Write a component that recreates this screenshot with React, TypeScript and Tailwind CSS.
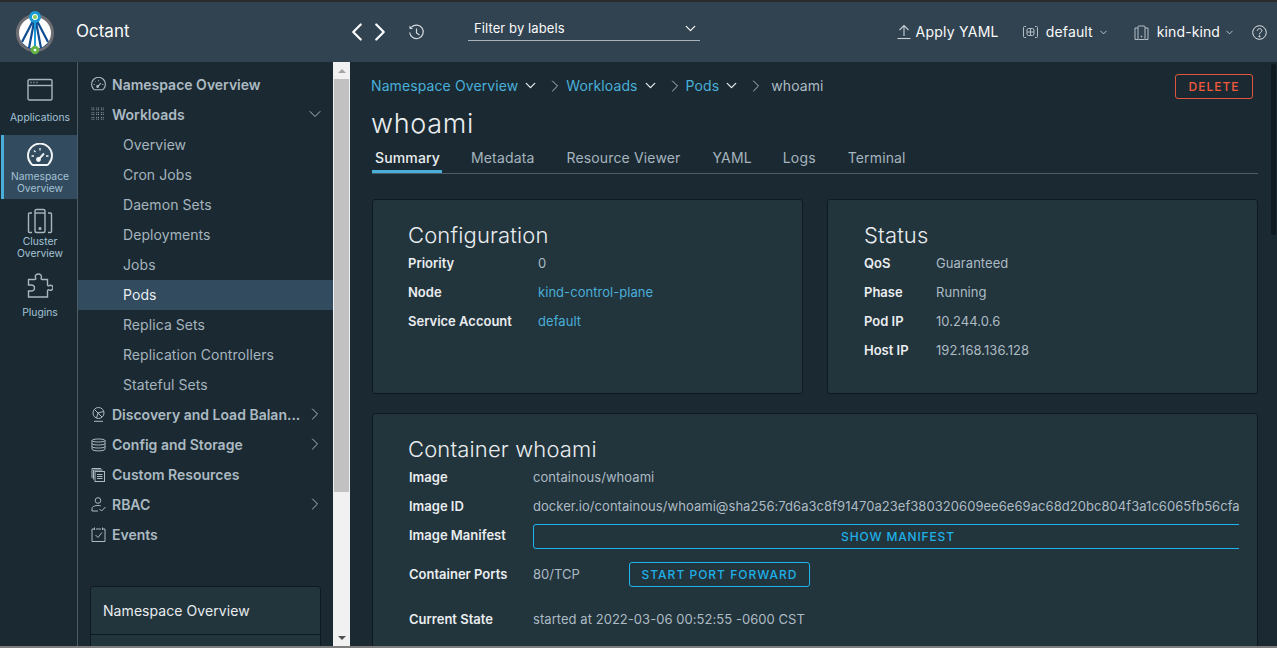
import React from 'react';
import { ChevronDown, ChevronLeft, ChevronRight } from 'lucide-react';

const stroke = { fill: 'none', stroke: 'currentColor', strokeWidth: 1.2 };

function Logo() {
  return (
    <svg width="40" height="46" viewBox="0 0 40 46">
      <circle cx="20" cy="24" r="17.5" fill="#fff" stroke="#6f6f73" strokeWidth="3" />
      <path d="M6 33 A17 17 0 0 0 34 33 L28 38 L20 41 L12 38 Z" fill="#0f4c92" />
      <path d="M20 8 L7 33 M20 8 L33 33 M20 8 L14 39 M20 8 L26 39" stroke="#0f4c92" strokeWidth="2.2" fill="none" />
      <path d="M19 8 h2 v32 h-2 z" fill="#1b9ad6" />
      <circle cx="20" cy="8" r="6" fill="#1b9ad6" />
      <circle cx="20" cy="8" r="2.6" fill="#8ccf5a" stroke="#fff" strokeWidth="1" />
      <circle cx="20" cy="41" r="4.2" fill="#62b544" />
      <circle cx="20" cy="41" r="1.3" fill="#fff" />
    </svg>
  );
}

function AppIcon() {
  return (
    <svg width="26" height="24" viewBox="0 0 26 24" {...stroke} strokeWidth={1.4}>
      <rect x="1" y="1.5" width="24" height="20.5" rx="1.5" />
      <path d="M1 7.5 H25" />
      <path d="M3.5 4.5h1M6.5 4.5h1M9.5 4.5h1" />
    </svg>
  );
}

function GaugeIcon({ size = 26 }: { size?: number }) {
  return (
    <svg width={size} height={size} viewBox="0 0 26 26" {...stroke} strokeWidth={1.9}>
      <path d="M6 22 H20 A3 3 0 0 0 22 20.5 A12 12 0 1 0 4 20.5 A3 3 0 0 0 6 22 Z" />
      <path d="M13 5v2.5M4.500 13h2.500M19 13h2.500M7 7.500l1.500 1.500" strokeWidth={1.3} />
      <path d="M11.500 16.500 L17 10.500" />
      <circle cx="11.500" cy="16.500" r="1.500" fill="currentColor" />
    </svg>
  );
}

function ClusterIcon() {
  return (
    <svg width="26" height="26" viewBox="0 0 26 26" {...stroke} strokeWidth={1.4}>
      <rect x="8" y="1.500" width="10" height="23" rx="1.500" />
      <path d="M8 5h10" />
      <path d="M5 5H2.500a1 1 0 0 0-1 1v17.500a1 1 0 0 0 1 1H5M21 5h2.500a1 1 0 0 1 1 1v17.500a1 1 0 0 1-1 1H21" />
      <circle cx="13" cy="20.500" r="0.900" fill="currentColor" />
    </svg>
  );
}

function PuzzleIcon() {
  return (
    <svg width="26" height="26" viewBox="0 0 26 26" {...stroke} strokeWidth={1.4}>
      <path d="M1.500 6.500h6.500c1.200 0 1-1.200 .5-2-1-2 1-3.500 3-3.500s3.500 1.800 2.800 3.500c-.4 1-.3 2 .7 2h5.500v5.500c0 1 1 1 2 .5 1.800-.8 3.500 .5 3.500 2.300s-1.700 3-3.500 2.300c-1-.4-2-.5-2 .5v6.400H1.500v-6h2.500c2.500 0 3.500-1.500 3.500-3s-1-3-3.500-3H1.500z" />
    </svg>
  );
}

function GridIcon() {
  return (
    <svg width="14" height="14" viewBox="0 0 14 14" fill="currentColor" opacity={0.8}>
      {[0.5, 5.200, 9.900].map((y) =>
        [0.5, 5.200, 9.900].map((x) => (
          <g key={`${x}-${y}`}>
            <rect x={x} y={y} width="1" height="1" />
            <rect x={x + 1.800} y={y} width="1" height="1" />
            <rect x={x} y={y + 1.800} width="1" height="1" />
            <rect x={x + 1.800} y={y + 1.800} width="1" height="1" />
          </g>
        )),
      )}
    </svg>
  );
}

function NetIcon() {
  return (
    <svg width="15" height="15" viewBox="0 0 15 15" {...stroke} strokeWidth={1}>
      <circle cx="7.500" cy="6" r="5.500" />
      <path d="M3.500 2.500 L7 6 L12.500 4.500 M7 6 L5.500 11 M7 6 L11 10" />
      <path d="M3 14.300 H12" />
    </svg>
  );
}

function DbIcon() {
  return (
    <svg width="15" height="15" viewBox="0 0 15 15" {...stroke} strokeWidth={1}>
      <path d="M1 3.500C1 1.500 14 1.500 14 3.500V12C14 14.500 1 14.500 1 12Z" />
      <path d="M1 3.500C1 5.500 14 5.500 14 3.500M1 6.500C1 8.500 14 8.500 14 6.500M1 9.500C1 11.500 14 11.500 14 9.500" />
    </svg>
  );
}

function PagesIcon() {
  return (
    <svg width="15" height="15" viewBox="0 0 15 15" {...stroke} strokeWidth={1}>
      <path d="M1 11V1.500h9" />
      <path d="M2.500 12.500V3h9" />
      <rect x="4" y="4.500" width="9.500" height="10" fill="#1b2a32" />
      <path d="M6 7.500h5.500M6 9.500h5.500M6 11.500h5.500" />
    </svg>
  );
}

function RbacIcon() {
  return (
    <svg width="15" height="15" viewBox="0 0 15 15" {...stroke} strokeWidth={1}>
      <circle cx="7" cy="3.500" r="2.800" />
      <path d="M1 14v-2.500C1 9.500 4 8.500 7 8.500c1 0 2 .1 2.800 .4M1 14h6" />
      <path d="M8.500 12l2 2 4-4" />
    </svg>
  );
}

function CalendarIcon() {
  return (
    <svg width="15" height="15" viewBox="0 0 15 15" {...stroke} strokeWidth={1}>
      <path d="M3.500 2H1v12.500h13V2h-2.500M5 2h5" />
      <path d="M3.500 .5v2.500M11.500 .5v2.500" />
      <path d="M4.500 8l2.500 2.500 4-5" />
    </svg>
  );
}

function HistoryIcon() {
  return (
    <svg width="17" height="17" viewBox="0 0 17 17" {...stroke} strokeWidth={1.200}>
      <path d="M3.500 3.200A6.800 6.800 0 1 1 1.700 8.500" />
      <path d="M1.500 1.500L1.500 5L5 5" fill="currentColor" stroke="none" />
      <path d="M8.500 4.500V9L11.500 11" />
    </svg>
  );
}

function UploadIcon() {
  return (
    <svg width="14" height="16" viewBox="0 0 14 16" {...stroke} strokeWidth={1.100}>
      <path d="M7 12V1.500M2.500 6L7 1.500 11.500 6" />
      <path d="M.5 14.500H13.500" />
    </svg>
  );
}

function NamespaceIcon() {
  return (
    <svg width="15" height="14" viewBox="0 0 15 14" {...stroke} strokeWidth={1}>
      <path d="M3 1.500H1.500a1 1 0 0 0-1 1v9a1 1 0 0 0 1 1H3M12 1.500h1.500a1 1 0 0 1 1 1v9a1 1 0 0 1-1 1H12" />
      <rect x="4" y="3.500" width="7" height="7" rx="1.500" />
      <path d="M4 7h7M7.500 3.500v7" />
    </svg>
  );
}

function ContextIcon() {
  return (
    <svg width="15" height="15" viewBox="0 0 15 15" {...stroke} strokeWidth={1}>
      <rect x="4" y="1" width="7" height="13.500" rx="1" />
      <path d="M4 3H1v11.500h3M11 3h3v11.500h-3" />
      <circle cx="7.500" cy="11.500" r=".5" fill="currentColor" />
    </svg>
  );
}

function HelpIcon() {
  return (
    <svg width="15" height="15" viewBox="0 0 15 15" {...stroke} strokeWidth={1}>
      <circle cx="7.500" cy="7.500" r="6.800" />
      <path d="M5.300 5.800C5.300 3 9.800 3 9.800 5.600 9.800 7.300 7.500 7.300 7.500 9.300" />
      <circle cx="7.500" cy="11.300" r=".6" fill="currentColor" />
    </svg>
  );
}

const rail = [
  { label: ['Applications'], icon: <AppIcon />, box: 'h-[73px] pt-[16px]', gap: 'mt-[9px]' },
  { label: ['Namespace', 'Overview'], icon: <GaugeIcon />, box: 'h-[64px] pt-[8px]', gap: 'mt-[1px]', active: true },
  { label: ['Cluster', 'Overview'], icon: <ClusterIcon />, box: 'h-[65px] pt-[9px]', gap: 'mt-[1px]' },
  { label: ['Plugins'], icon: <PuzzleIcon />, box: 'h-[60px] pt-[9px]', gap: 'mt-[7px]' },
];

const subItems = ['Overview', 'Cron Jobs', 'Daemon Sets', 'Deployments', 'Jobs', 'Pods', 'Replica Sets', 'Replication Controllers', 'Stateful Sets'];

const topItems = [
  { label: 'Discovery and Load Balan...', icon: <NetIcon />, arrow: true },
  { label: 'Config and Storage', icon: <DbIcon />, arrow: true },
  { label: 'Custom Resources', icon: <PagesIcon /> },
  { label: 'RBAC', icon: <RbacIcon />, arrow: true },
  { label: 'Events', icon: <CalendarIcon /> },
];

function NavTop({ label, icon, arrow, open }: { label: string; icon: React.ReactNode; arrow?: boolean; open?: boolean }) {
  return (
    <div className="flex h-[30px] shrink-0 items-center pb-[2px] pl-[13px] pr-[8px] text-[#acbac3]">
      <span className="flex w-[21px] shrink-0 items-center">{icon}</span>
      <span className="flex-1 truncate text-[14px] font-semibold">{label}</span>
      {open && <ChevronDown size={20} strokeWidth={1.200} />}
      {arrow && <ChevronRight size={20} strokeWidth={1.200} />}
    </div>
  );
}

function Scrollbar() {
  return (
    <div className="flex w-[17px] shrink-0 flex-col items-center bg-[#f1f1f1]">
      <div className="flex h-[17px] items-center justify-center">
        <div className="h-0 w-0 border-x-[4px] border-b-[4px] border-x-transparent border-b-[#a3a3a3]" />
      </div>
      <div className="h-[413px] w-[15px] bg-[#c1c1c1]" />
      <div className="flex-1" />
      <div className="flex h-[17px] items-center justify-center">
        <div className="h-0 w-0 border-x-[4px] border-t-[4px] border-x-transparent border-t-[#505050]" />
      </div>
    </div>
  );
}

function Crumb({ label }: { label: string }) {
  return (
    <>
      <span className="text-[#49afd9]">{label}</span>
      <ChevronDown size={17} strokeWidth={1.800} className="ml-[4px] text-[#e9ecef]" />
      <ChevronRight size={20} strokeWidth={1.200} className="ml-[6px] mr-[1px] text-[#adbbc4]" />
    </>
  );
}

function Row({ label, w, children, h = 'h-[29px]' }: { label: string; w: string; children: React.ReactNode; h?: string }) {
  return (
    <div className={`flex items-center text-[13px] ${h}`}>
      <span className={`shrink-0 font-semibold text-[#eaedf0] ${w}`}>{label}</span>
      <span className="whitespace-nowrap tracking-[0.05px] text-[#adbbc4]">{children}</span>
    </div>
  );
}

const cardClass = 'rounded-[3px] border border-[#0f1a20] bg-[#22343c]';
const link = 'text-[#49afd9]';

export default function App() {
  return (
    <div className="flex h-[648px] w-[1277px] flex-col overflow-hidden bg-[#1b2a32] font-[Inter,sans-serif]">
      <div className="h-[2px] shrink-0 bg-[#2a2a2c]" />
      <header className="flex h-[60px] shrink-0 items-center bg-[#314351] text-[#fafafa]">
        <div className="ml-[15px] flex w-[40px] justify-center">
          <Logo />
        </div>
        <span className="ml-[21px] w-[266px] text-[17px]">Octant</span>
        <ChevronLeft size={30} strokeWidth={1.800} />
        <ChevronRight size={30} strokeWidth={1.800} className="-ml-[7px]" />
        <span className="ml-[13px] text-[#d4d9dd]">
          <HistoryIcon />
        </span>
        <div className="mb-[6px] ml-[43px] flex h-[24px] w-[232px] items-center justify-between border-b border-[#a9b2b8] pl-[6px] pr-[1px] text-[13px] tracking-[0.1px]">
          <span>Filter by labels</span>
          <ChevronDown size={17} strokeWidth={1.700} />
        </div>
        <div className="flex-1" />
        <span className="text-[#c9d0d5]">
          <UploadIcon />
        </span>
        <span className="mb-[2px] ml-[4px] text-[14px] tracking-[0.25px]">Apply YAML</span>
        <span className="ml-[24px] text-[#b4bec5]">
          <NamespaceIcon />
        </span>
        <span className="mb-[2px] ml-[8px] text-[14px] tracking-[0.15px]">default</span>
        <ChevronDown size={11} strokeWidth={1.700} className="ml-[5px] text-[#dfe3e6]" />
        <span className="ml-[25px] text-[#b4bec5]">
          <ContextIcon />
        </span>
        <span className="mb-[2px] ml-[8px] text-[14px] tracking-[0.1px]">kind-kind</span>
        <ChevronDown size={11} strokeWidth={1.700} className="ml-[4px] text-[#dfe3e6]" />
        <span className="ml-[17px] mr-[10px] text-[#dfe3e6]">
          <HelpIcon />
        </span>
      </header>

      <div className="flex min-h-0 flex-1">
        <aside className="w-[78px] shrink-0 border-r border-[#4b5c67] bg-[#1b2a32] pl-[1px]">
          {rail.map((item) => (
            <div
              key={item.label[0]}
              className={`flex flex-col items-center ${item.box} ${item.active ? 'border-l-[3px] border-[#49afd9] bg-[#324b5e] pr-[1px] text-[#f2f4f5]' : 'pl-[2px] text-[#a9b6be]'}`}
            >
              {item.icon}
              <div className={`text-center text-[10.300px] leading-[12px] text-[#a4c2d6] ${item.gap}`}>
                {item.label.map((line) => (
                  <div key={line}>{line}</div>
                ))}
              </div>
            </div>
          ))}
        </aside>

        <nav className="flex w-[255px] shrink-0 flex-col overflow-hidden bg-[#1b2a32] pt-[8px]">
          <NavTop label="Namespace Overview" icon={<GaugeIcon size={15} />} />
          <NavTop label="Workloads" icon={<GridIcon />} open />
          {subItems.map((name) => (
            <div
              key={name}
              className={`flex h-[30px] shrink-0 items-center pb-[2px] pl-[45px] text-[14px] tracking-[0.07px] ${name === 'Pods' ? 'bg-[#324b5e] text-[#eaedf0]' : 'text-[#a5b4be]'}`}
            >
              {name}
            </div>
          ))}
          {topItems.map((item) => (
            <NavTop key={item.label} {...item} />
          ))}
          <div className={`mx-[12px] mt-[36px] shrink-0 ${cardClass}`}>
            <div className="flex h-[48px] items-center border-b border-[#0f1a20] pl-[12px] text-[14px] tracking-[0.07px] text-[#e9ecef]">
              Namespace Overview
            </div>
            <div className="h-[30px]" />
          </div>
        </nav>

        <Scrollbar />

        <main className="relative min-w-0 flex-1 overflow-hidden bg-[#1b2a32] pl-[22px] pr-[19px]">
          <div className="absolute right-[1px] top-[2px] h-[171px] w-[5px] rounded-[3px] bg-[#101a20]" />
          <div className="-ml-[1px] mb-[1px] flex h-[47px] items-center text-[14px] tracking-[0.1px]">
            <Crumb label="Namespace Overview" />
            <Crumb label="Workloads" />
            <Crumb label="Pods" />
            <span className="ml-[4px] text-[#adbbc4]">whoami</span>
            <button className="ml-auto mr-[5px] mt-[2px] h-[25px] w-[78px] rounded-[3px] border border-[#e0563c] text-[12px] font-medium tracking-[1px] text-[#f2593d]">
              DELETE
            </button>
          </div>
          <h1 className="-ml-[1px] h-[28px] text-[27px] font-light leading-[28px] tracking-[0.7px] text-[#eaedf0]">whoami</h1>
          <div className="mt-[6px] flex h-[30px] items-start border-b border-[#4b5c67] pt-[1px] text-[14px] tracking-[0.15px] text-[#a5b4be]">
            <div className="h-[28px] w-[70px] border-b-[3px] border-[#49afd9] pl-[3px] pt-[2px] font-medium text-[#eaedf0]">Summary</div>
            <div className="ml-[29px] pt-[2px]">Metadata</div>
            <div className="ml-[32px] pt-[2px]">Resource Viewer</div>
            <div className="ml-[32px] pt-[2px]">YAML</div>
            <div className="ml-[31px] pt-[2px]">Logs</div>
            <div className="ml-[32px] pt-[2px]">Terminal</div>
          </div>

          <div className="mt-[25px] grid grid-cols-[431px_431px] gap-x-[24px]">
            <section className={`h-[195px] pl-[35px] pt-[22px] ${cardClass}`}>
              <h2 className="h-[27px] text-[22px] font-light leading-[27px] tracking-[0.15px] text-[#eaedf0]">Configuration</h2>
              <Row label="Priority" w="w-[130px]">0</Row>
              <Row label="Node" w="w-[130px]"><span className={link}>kind-control-plane</span></Row>
              <Row label="Service Account" w="w-[130px]"><span className={link}>default</span></Row>
            </section>
            <section className={`h-[195px] pl-[36px] pt-[22px] ${cardClass}`}>
              <h2 className="h-[27px] text-[22px] font-light leading-[27px] tracking-[0.15px] text-[#eaedf0]">Status</h2>
              <Row label="QoS" w="w-[72px]">Guaranteed</Row>
              <Row label="Phase" w="w-[72px]">Running</Row>
              <Row label="Pod IP" w="w-[72px]">10.244.0.6</Row>
              <Row label="Host IP" w="w-[72px]">192.168.136.128</Row>
            </section>
          </div>

          <section className={`mt-[19px] h-[300px] pl-[36px] pt-[22px] ${cardClass}`}>
            <h2 className="-ml-[1px] h-[27px] text-[22px] font-light leading-[27px] tracking-[0.15px] text-[#eaedf0]">Container whoami</h2>
            <Row label="Image" w="w-[124px]">containous/whoami</Row>
            <Row label="Image ID" w="w-[124px]">docker.io/containous/whoami@sha256:7d6a3c8f91470a23ef380320609ee6e69ac68d20bc804f3a1c6065fb56cfa</Row>
            <div className="flex h-[29px] items-center text-[13px]">
              <span className="w-[124px] shrink-0 font-semibold text-[#eaedf0]">Image Manifest</span>
              <div className="mt-[2px] w-[706px] overflow-hidden">
                <button className="h-[25px] w-[730px] rounded-[3px] border border-[#1db5f0] text-[12px] font-medium tracking-[0.85px] text-[#1fb0e8]">
                  SHOW MANIFEST
                </button>
              </div>
            </div>
            <div className="flex h-[49px] items-center text-[13px]">
              <span className="w-[124px] shrink-0 font-semibold text-[#eaedf0]">Container Ports</span>
              <span className="w-[96px] shrink-0 text-[#adbbc4]">80/TCP</span>
              <button className="h-[25px] w-[181px] rounded-[3px] border border-[#1db5f0] text-[12px] font-medium tracking-[1px] text-[#1fb0e8]">
                START PORT FORWARD
              </button>
            </div>
            <Row label="Current State" w="w-[124px]" h="h-[41px]">started at 2022-03-06 00:52:55 -0600 CST</Row>
            <Row label="Ready" w="w-[124px]">true</Row>
          </section>
        </main>
      </div>
      <div className="h-[2px] shrink-0 bg-[#7d7d7d]" />
    </div>
  );
}
